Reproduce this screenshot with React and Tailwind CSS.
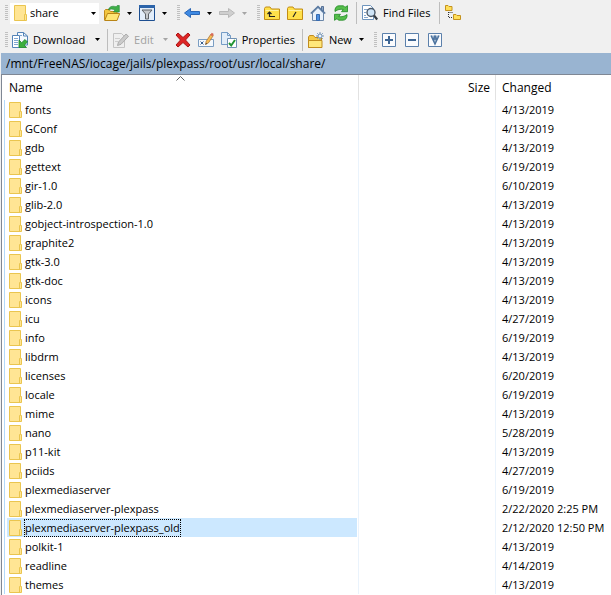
import React from "react";
import clsx from "clsx";

const files = [
  { name: "fonts", changed: "4/13/2019" },
  { name: "GConf", changed: "4/13/2019" },
  { name: "gdb", changed: "4/13/2019" },
  { name: "gettext", changed: "6/19/2019" },
  { name: "gir-1.0", changed: "6/10/2019" },
  { name: "glib-2.0", changed: "4/13/2019" },
  { name: "gobject-introspection-1.0", changed: "4/13/2019" },
  { name: "graphite2", changed: "4/13/2019" },
  { name: "gtk-3.0", changed: "4/13/2019" },
  { name: "gtk-doc", changed: "4/13/2019" },
  { name: "icons", changed: "4/13/2019" },
  { name: "icu", changed: "4/27/2019" },
  { name: "info", changed: "6/19/2019" },
  { name: "libdrm", changed: "4/13/2019" },
  { name: "licenses", changed: "6/20/2019" },
  { name: "locale", changed: "6/19/2019" },
  { name: "mime", changed: "4/13/2019" },
  { name: "nano", changed: "5/28/2019" },
  { name: "p11-kit", changed: "4/13/2019" },
  { name: "pciids", changed: "4/27/2019" },
  { name: "plexmediaserver", changed: "6/19/2019" },
  { name: "plexmediaserver-plexpass", changed: "2/22/2020 2:25 PM" },
  { name: "plexmediaserver-plexpass_old", changed: "2/12/2020 12:50 PM", selected: true },
  { name: "polkit-1", changed: "4/13/2019" },
  { name: "readline", changed: "4/14/2019" },
  { name: "themes", changed: "4/13/2019" },
];

const Icon = ({ children }) => (
  <svg className="block h-4 w-4 shrink-0" viewBox="0 0 16 16" fill="none" aria-hidden="true">
    {children}
  </svg>
);

const FolderIcon = () => (
  <svg className="block h-4 w-[13px] shrink-0" viewBox="0 0 13 16" fill="none" aria-hidden="true">
    <path d="M.5.5h11v9h1v6H.5z" fill="#ffe594" stroke="#eac54f" />
    <path d="M10.5 15V9.5h1" stroke="#eac54f" />
  </svg>
);

const OpenIcon = () => (
  <Icon>
    <path d="M.5 15V5.500l1-1H5l1.500 2H13V9" fill="#f3c63f" stroke="#c08a1c" />
    <path d="M.7 15.500L3.500 8.500h12.200L13 15.500z" fill="#ffe675" stroke="#b98416" />
    <path d="M4.500 5C5 1.500 8.500.5 12 1.800L13.300.5h2V7H9.500L11 5C8.500 3.800 6.500 3.800 4.500 5z" fill="#3fae49" stroke="#1e8430" strokeWidth=".6" />
  </Icon>
);

const FilterIcon = () => (
  <Icon>
    <path d="M.5.500h15v15H.5z" fill="#e3eefa" stroke="#1d4f91" />
    <path d="M0 0h16v3H0z" fill="#2c64aa" />
    <path d="M3 5h10L9.500 9v5h-3V9z" fill="#c6c9cc" stroke="#5e6266" />
  </Icon>
);

const ArrowIcon = ({ forward }) => (
  <Icon>
    {forward ? (
      <path d="M15.500 8L9.500 3.500v3H.5v3h9v3z" fill="#cfcfcf" stroke="#b8b8b8" />
    ) : (
      <path d="M.5 8l6-4.500v3h9v3h-9v3z" fill="#3e8ae3" stroke="#2b66b5" />
    )}
  </Icon>
);

const YellowFolder = ({ children }) => (
  <Icon>
    <path d="M.5 14.500v-11l1-1.500h4.500l1.500 2h8v10.500z" fill="#ffe04a" stroke="#c28d15" />
    <path d="M1.500 5.500h13" stroke="#fff2a0" />
    {children}
  </Icon>
);

const HomeIcon = () => (
  <Icon>
    <path d="M11.500 1.500h2v5h-2z" fill="#8aa6c8" stroke="#567196" />
    <path d="M2.500 8v7.500h11V8L8 2.500z" fill="#e9f1fa" stroke="#6a86a8" />
    <path d="M6.500 9.500h3v6h-3z" fill="#4d8fe0" stroke="#366bb0" />
    <path d="M.8 8.500L8 1.500l7.200 7" stroke="#56779f" strokeWidth="1.600" />
  </Icon>
);

const RefreshIcon = () => (
  <Icon>
    <path d="M2 6.500C1.500 3 3.500.8 6 .8h4.500l1.500 1.500L14.500.7v6H8.500l1.700-2.200C7.500 3.800 4.500 4.500 2 6.500z" fill="#55bd4a" stroke="#218a24" strokeWidth=".8" />
    <path d="M14 9.500c.5 3.500-1.500 5.700-4 5.700H5.500L4 13.700l-2.500 1.600v-6h6l-1.700 2.200c2.700.7 5.700 0 8.200-2z" fill="#55bd4a" stroke="#218a24" strokeWidth=".8" />
  </Icon>
);

const FindIcon = () => (
  <Icon>
    <path d="M.5.5h8l3 3v11H.5z" fill="#fff" stroke="#6e94bd" />
    <path d="M2 4.500h4M2 7.500h2M2 10.500h2M2 12.500h4" stroke="#86a7cc" />
    <circle cx="9" cy="7.500" r="4" fill="#cfe5f8" stroke="#4a5867" strokeWidth="1.400" />
    <path d="M12 10.500l3.200 4" stroke="#343b43" strokeWidth="2.200" />
  </Icon>
);

const TreeIcon = () => (
  <Icon>
    <path d="M.5 5.500v-5h2.500l1 1h3v4zM8.500 14.500v-5H11l1 1h3.500v4z" fill="#ffdf59" stroke="#c4921e" />
    <path d="M3.500 7v5.500H8M3.500 7.500H8" stroke="#333" strokeDasharray="1 1" />
  </Icon>
);

const DownloadIcon = () => (
  <Icon>
    <path d="M5.500.5h6l4 3.500v9h-10z" fill="#f5f9fd" stroke="#5484b8" />
    <path d="M11.500.5V4h4" stroke="#5484b8" />
    <path d="M.5 3.500h7v12h-7z" fill="#fff" stroke="#5484b8" />
    <path d="M7 3.500h3M2 6.500h4M2 8.500h4M2 10.500h4M2 12.500h4" stroke="#82a7d0" />
    <path d="M7 8v7.500h7.500l-2.300-2.300 3.300-3.200L13 7.500l-3.300 3.200z" fill="#3daf3d" stroke="#18832a" strokeWidth=".8" />
  </Icon>
);

const EditIcon = () => (
  <Icon>
    <path d="M.5 1.500h8l3 3v11H.5z" fill="#efefef" stroke="#c4c4c4" />
    <path d="M2 6.500h5M2 9.500h3" stroke="#cecece" />
    <path d="M4.500 13.500l1-3.500 7.500-8 2.500 2.300-7.500 8z" fill="#cbcbcb" stroke="#acacac" />
  </Icon>
);

const DeleteIcon = () => (
  <Icon>
    <path d="M1 3l2-2 5 4.500L13 1l2 2-4.500 5 4.500 5-2 2-5-4.500L3 15l-2-2 4.500-5z" fill="#dd2525" stroke="#ad1515" />
  </Icon>
);

const RenameIcon = () => (
  <Icon>
    <path d="M.5 7.500h15v7H.5z" fill="#f5f9fd" stroke="#7b9dc2" />
    <path d="M2.500 9.500l3 3M5.500 9.500l-3 3" stroke="#3a5f91" />
    <path d="M7.500 12.500l.7-3.200L13 2l2.300 1.500-4.800 7.300z" fill="#f8bd55" stroke="#ad7636" strokeWidth=".8" />
    <path d="M12.300 3l1.500-2.300 2 1.300-1.500 2.300z" fill="#d86a59" />
    <path d="M7.500 12.700l.5-1.700 1.200.7z" fill="#333" />
  </Icon>
);

const PropertiesIcon = () => (
  <Icon>
    <path d="M.5.500h6l3 3v9h-9z" fill="#e2edf8" stroke="#759cc6" />
    <path d="M6.500.5v3h3" stroke="#759cc6" />
    <path d="M6.500 6.500h9v9h-9z" fill="#fff" stroke="#7191b4" />
    <path d="M8 11l2.200 2.500L14 8" stroke="#219431" strokeWidth="2" />
  </Icon>
);

const NewIcon = () => (
  <Icon>
    <path d="M.5 15.500V5l1-1.500h4L7 5.500h6.500v10z" fill="#f6ca45" stroke="#c18c1e" />
    <path d="M.5 15.500v-7h13.500v7z" fill="#ffe77b" stroke="#c18c1e" />
    <path d="M12 0v8M8 4h8M9.200 1.200l5.600 5.600M14.800 1.200L9.200 6.800" stroke="#7897b9" />
    <circle cx="12" cy="4" r="2" fill="#edf5fc" stroke="#7897b9" />
  </Icon>
);

const SelectIcon = ({ children }) => (
  <svg className="block h-3.5 w-3.5" viewBox="0 0 14 14" fill="none" aria-hidden="true">
    <path d="M.5.5h13v13H.5z" fill="#fafbfd" stroke="#5b80ab" />
    {children}
  </svg>
);

const Caret = ({ muted }) => (
  <svg className={clsx("block h-[3px] w-[5px] shrink-0", muted ? "text-[#a5a5a5]" : "text-black")} viewBox="0 0 5 3" fill="currentColor" aria-hidden="true">
    <path d="M0 0h5L2.500 3z" />
  </svg>
);

const Grip = ({ className }) => (
  <span
    className={clsx(
      "h-4 w-[3px] shrink-0 bg-[repeating-linear-gradient(to_bottom,#c0c0c0_0px,#c0c0c0_1px,transparent_1px,transparent_2px)]",
      className
    )}
  />
);

const Divider = () => <span className="h-[22px] w-px shrink-0 bg-[#bdbdbd]" />;

const ToolButton = ({ label, text, disabled, className, children }) => (
  <button
    type="button"
    aria-label={label}
    disabled={disabled}
    className={clsx("flex h-5 shrink-0 items-center gap-[5px] disabled:text-[#a0a0a0]", className)}
  >
    {children}
    {text && <span>{text}</span>}
  </button>
);

const MenuButton = ({ label, disabled, className }) => (
  <button
    type="button"
    aria-label={label}
    disabled={disabled}
    className={clsx("flex h-5 w-[5px] shrink-0 items-center", className)}
  >
    <Caret muted={disabled} />
  </button>
);

const NavigationBar = () => (
  <div className="flex h-[26px] items-center pl-[5px]">
    <Grip />
    <label className="ml-0.5 flex h-[21px] w-[89px] shrink-0 items-center bg-white pr-[3px] pl-1">
      <FolderIcon />
      <select aria-label="Remote directory" className="ml-[3px] min-w-0 flex-1 appearance-none outline-none">
        <option>share</option>
      </select>
      <Caret />
    </label>
    <ToolButton label="Open directory" className="ml-[5px]"><OpenIcon /></ToolButton>
    <MenuButton label="Bookmarks" className="ml-[7px]" />
    <ToolButton label="Filter" className="ml-[7px]"><FilterIcon /></ToolButton>
    <MenuButton label="Filter options" className="ml-[7px]" />
    <Grip className="ml-2.5" />
    <ToolButton label="Back" className="ml-1"><ArrowIcon /></ToolButton>
    <MenuButton label="Back history" className="ml-[7px]" />
    <ToolButton label="Forward" disabled className="ml-[7px]"><ArrowIcon forward /></ToolButton>
    <MenuButton label="Forward history" disabled className="ml-[7px]" />
    <Grip className="ml-2.5" />
    <ToolButton label="Parent directory" className="ml-1">
      <YellowFolder>
        <path d="M5.500 7v4.500H11M3.500 9l2-2 2 2" stroke="#222" strokeWidth="1.200" />
      </YellowFolder>
    </ToolButton>
    <ToolButton label="Root directory" className="ml-[7px]">
      <YellowFolder>
        <path d="M6 12l3-5" stroke="#222" strokeWidth="1.200" />
      </YellowFolder>
    </ToolButton>
    <ToolButton label="Home directory" className="ml-[7px]"><HomeIcon /></ToolButton>
    <ToolButton label="Refresh" className="ml-[7px] mr-[7px]"><RefreshIcon /></ToolButton>
    <Divider />
    <ToolButton text="Find Files" className="ml-[5px] mr-[9px]"><FindIcon /></ToolButton>
    <Divider />
    <ToolButton label="Directory tree" className="ml-[5px]"><TreeIcon /></ToolButton>
  </div>
);

const CommandBar = () => (
  <div className="flex h-[27px] items-center pl-[5px]">
    <Grip />
    <ToolButton text="Download" className="ml-1"><DownloadIcon /></ToolButton>
    <MenuButton label="Download options" className="ml-2.5 mr-[7px]" />
    <Divider />
    <ToolButton text="Edit" disabled className="ml-[5px]"><EditIcon /></ToolButton>
    <MenuButton label="Edit options" disabled className="ml-[9px]" />
    <ToolButton label="Delete" className="ml-[7px]"><DeleteIcon /></ToolButton>
    <ToolButton label="Rename" className="ml-[7px]"><RenameIcon /></ToolButton>
    <ToolButton text="Properties" className="ml-[7px] mr-[7px]"><PropertiesIcon /></ToolButton>
    <Divider />
    <ToolButton text="New" className="ml-[5px]"><NewIcon /></ToolButton>
    <MenuButton label="New options" className="ml-[7px]" />
    <Grip className="ml-2.5" />
    <ToolButton label="Select files" className="ml-[5px]">
      <SelectIcon><path d="M3 7h8M7 3v8" stroke="#3d6593" strokeWidth="2" /></SelectIcon>
    </ToolButton>
    <ToolButton label="Unselect files" className="ml-[9px]">
      <SelectIcon><path d="M3 7h8" stroke="#3d6593" strokeWidth="2" /></SelectIcon>
    </ToolButton>
    <ToolButton label="Select all" className="ml-[9px]">
      <SelectIcon><path d="M3 2.500L7 11l4-8.500M4.500 6h5M5.500 6L7 3l1.500 3" fill="#9fb5ce" stroke="#4a719d" strokeWidth="1.400" /></SelectIcon>
    </ToolButton>
  </div>
);

const FileRow = ({ file }) => (
  <tr className="h-[19px]">
    <td className="border-r border-[#eaf3fc] p-0 pl-0.5">
      <div className="border-l border-[#b3d9fa] pr-px pl-0.5">
        <div className={clsx("flex h-[19px] items-center gap-0.5 pl-0.5", file.selected && "bg-[#cce8ff]")}>
          <FolderIcon />
          <span className={clsx("border border-dotted leading-4", file.selected ? "border-black" : "border-transparent")}>
            {file.name}
          </span>
        </div>
      </div>
    </td>
    <td className="border-r border-[#eaf3fc] p-0"></td>
    <td className="p-0 pl-1.5">{file.changed}</td>
  </tr>
);

const FileList = () => (
  <div className="ml-px border-t border-l border-[#7f8794] bg-white pb-px">
    <table className="w-full table-fixed border-separate border-spacing-0 whitespace-nowrap">
      <colgroup>
        <col className="w-[357px]" />
        <col className="w-[137px]" />
        <col />
      </colgroup>
      <thead className="text-[12px]">
        <tr className="h-[25px]">
          <th className="relative border-r border-[#e2e2e2] p-0 pl-[7px] text-left font-normal">
            Name
            <svg className="absolute inset-x-0 top-px mx-auto h-[5px] w-[9px]" viewBox="0 0 9 5" fill="none" aria-hidden="true">
              <path d="M.5 4.500l4-4 4 4" stroke="#606060" />
            </svg>
          </th>
          <th className="border-r border-[#e2e2e2] p-0 pr-[5px] text-right font-normal">Size</th>
          <th className="p-0 pl-1.5 text-left font-normal">Changed</th>
        </tr>
      </thead>
      <tbody>
        {files.map((file) => (
          <FileRow key={file.name} file={file} />
        ))}
      </tbody>
    </table>
  </div>
);

const App = () => {
  return (
    <div className="overflow-hidden bg-[#f0f0f0] font-['Open_Sans','Noto_Sans',sans-serif] text-[11px] leading-4 text-black">
      <NavigationBar />
      <CommandBar />
      <div className="ml-px flex h-[21px] items-center bg-[#99b4d1] pl-[5px] text-[12px]">
        /mnt/FreeNAS/iocage/jails/plexpass/root/usr/local/share/
      </div>
      <FileList />
    </div>
  );
};

export default App;
